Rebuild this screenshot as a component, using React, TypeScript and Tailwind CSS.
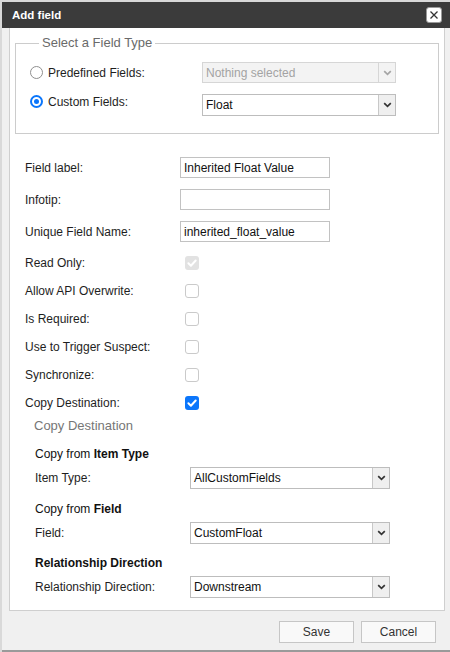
import React from "react";

function Chevron({ color }: { color: string }) {
  return (
    <svg width="9" height="6" viewBox="0 0 9 6">
      <path d="M1.2 1.2 4.5 4.4 7.8 1.2" fill="none" stroke={color} strokeWidth="1.7" />
    </svg>
  );
}

function CheckMark() {
  return (
    <svg width="14" height="14" viewBox="0 0 14 14">
      <path d="M3.4 7.3 5.9 9.7 10.7 4.5" fill="none" stroke="#fff" strokeWidth="2" strokeLinecap="round" strokeLinejoin="round" />
    </svg>
  );
}

function Box({ state }: { state: "on" | "off" | "locked" }) {
  if (state === "on")
    return (
      <div className="w-[14px] h-[14px] rounded-[3px] bg-[#0b76fb] flex items-center justify-center">
        <CheckMark />
      </div>
    );
  if (state === "locked")
    return (
      <div className="w-[14px] h-[14px] rounded-[3px] bg-[#e2e2e2] flex items-center justify-center">
        <CheckMark />
      </div>
    );
  return <div className="w-[14px] h-[14px] rounded-[3px] border border-[#cacaca] bg-white" />;
}

function Dropdown({ value, wide }: { value: string; wide?: boolean }) {
  return (
    <div
      className={`flex h-[22px] border border-[#bdbdbd] bg-white ${wide ? "w-[200px]" : "w-[194px]"}`}
    >
      <div className="flex-1 flex items-center pl-[3px] text-[12px] text-[#111]">{value}</div>
      <div className="w-[17px] border-l border-[#c8c8c8] bg-[#efefef] flex items-center justify-center">
        <Chevron color="#333" />
      </div>
    </div>
  );
}

function TextRow({ label, value }: { label: string; value: string }) {
  return (
    <div className="flex items-center h-[21px]">
      <div className="w-[155px] text-[12px] text-[#1e1e1e]">{label}</div>
      <div className="w-[150px] h-[21px] border border-[#c2c2c2] bg-white flex items-center px-[3px] text-[12px] text-[#111]">
        {value}
      </div>
    </div>
  );
}

function CheckRow({ label, state }: { label: string; state: "on" | "off" | "locked" }) {
  return (
    <div className="flex items-center h-[28px]">
      <div className="w-[160px] text-[12px] text-[#1e1e1e]">{label}</div>
      <Box state={state} />
    </div>
  );
}

function SelectRow({ label, value }: { label: string; value: string }) {
  return (
    <div className="flex items-center h-[22px] mt-[4px]">
      <div className="w-[155px] text-[12px] text-[#1e1e1e]">{label}</div>
      <Dropdown value={value} wide />
    </div>
  );
}

export default function App() {
  return (
    <div className="w-[450px] h-[652px] overflow-hidden bg-[#d9d9d9] pt-[2px] pl-[2px] font-[family-name:'Liberation_Sans',Arial,Helvetica,sans-serif]">
      <div className="h-[650px] flex flex-col bg-[#f0f0f0]">
        {/* title bar */}
        <div className="h-[26px] bg-[#3b3b3b] flex items-center justify-between pl-[10px] pr-[8px]">
          <span className="text-white font-bold text-[11.5px] mt-[1px]">Add field</span>
          <div className="w-[16px] h-[16px] rounded-[3px] bg-white border border-[#9a9a9a] flex items-center justify-center">
            <svg width="10" height="10" viewBox="0 0 10 10">
              <path d="M1.5 1.5 8.5 8.5M8.5 1.5 1.5 8.5" stroke="#333" strokeWidth="1.3" />
            </svg>
          </div>
        </div>

        {/* main panel */}
        <div className="flex-1 ml-[7px] mr-[5px] bg-white border-x border-b border-[#cfcfcf] flex flex-col">
          <fieldset className="mt-[7px] mx-[5px] border border-[#cccccc] pl-[14px] pr-[10px] pt-[11px] pb-[17px]">
            <legend className="ml-[9px] px-[3px] text-[13px] leading-[16px] text-[#6a6a6a]">
              Select a Field Type
            </legend>
            <div className="flex items-center h-[21px]">
              <div className="w-[172px] flex items-center">
                <div className="w-[13px] h-[13px] rounded-full border border-[#8f8f8f] bg-white" />
                <span className="ml-[5px] text-[12px] text-[#1e1e1e]">Predefined Fields:</span>
              </div>
              <div className="flex w-[194px] h-[21px] border border-[#d6d6d6] bg-[#f3f3f3]">
                <div className="flex-1 flex items-center pl-[3px] text-[12px] text-[#a3a3a3]">Nothing selected</div>
                <div className="w-[17px] border-l border-[#d6d6d6] flex items-center justify-center">
                  <Chevron color="#a5a5a5" />
                </div>
              </div>
            </div>
            <div className="flex items-start h-[22px] mt-[11px]">
              <div className="w-[172px] flex items-center h-[15px]">
                <div className="w-[13px] h-[13px] rounded-full border-[2px] border-[#0b76fb] bg-white flex items-center justify-center">
                  <div className="w-[5px] h-[5px] rounded-full bg-[#0b76fb]" />
                </div>
                <span className="ml-[5px] text-[12px] text-[#1e1e1e]">Custom Fields:</span>
              </div>
              <Dropdown value="Float" />
            </div>
          </fieldset>

          <div className="pl-[15px] mt-[23px] flex flex-col gap-[11px]">
            <TextRow label="Field label:" value="Inherited Float Value" />
            <TextRow label="Infotip:" value="" />
            <TextRow label="Unique Field Name:" value="inherited_float_value" />
          </div>

          <div className="pl-[15px] mt-[7px] flex flex-col">
            <CheckRow label="Read Only:" state="locked" />
            <CheckRow label="Allow API Overwrite:" state="off" />
            <CheckRow label="Is Required:" state="off" />
            <CheckRow label="Use to Trigger Suspect:" state="off" />
            <CheckRow label="Synchronize:" state="off" />
            <CheckRow label="Copy Destination:" state="on" />
          </div>

          <div className="pl-[24px] h-[18px] flex items-center text-[13px] text-[#767676]">Copy Destination</div>

          <div className="pl-[25px] flex flex-col">
            <div className="mt-[10px] h-[18px] flex items-center text-[12px] text-[#111]">
              Copy from&nbsp;<span className="font-bold">Item Type</span>
            </div>
            <SelectRow label="Item Type:" value="AllCustomFields" />
            <div className="mt-[11px] h-[18px] flex items-center text-[12px] text-[#111]">
              Copy from&nbsp;<span className="font-bold">Field</span>
            </div>
            <SelectRow label="Field:" value="CustomFloat" />
            <div className="mt-[10px] h-[18px] flex items-center text-[12px] font-bold text-[#111]">
              Relationship Direction
            </div>
            <SelectRow label="Relationship Direction:" value="Downstream" />
          </div>
        </div>

        {/* footer buttons */}
        <div className="h-[41px] border-b-2 border-[#9a9a9a] flex justify-end items-start pt-[10px] pr-[14px] gap-[7px]">
          <button className="w-[75px] h-[22px] border border-[#c6c6c6] bg-[#f9f9f9] text-[12px] text-[#333]">Save</button>
          <button className="w-[75px] h-[22px] border border-[#c6c6c6] bg-[#f9f9f9] text-[12px] text-[#333]">Cancel</button>
        </div>
      </div>
    </div>
  );
}
